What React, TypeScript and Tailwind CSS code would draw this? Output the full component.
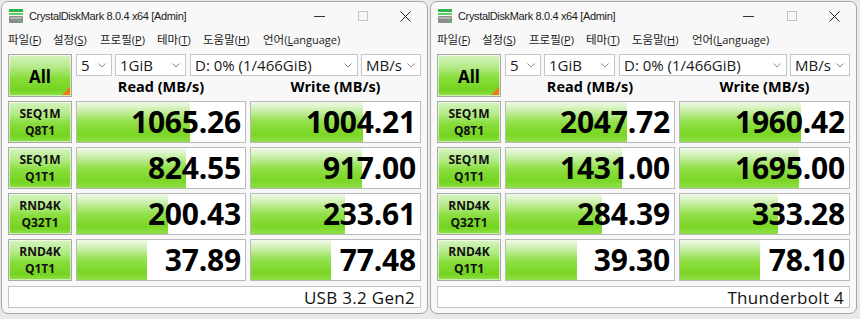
import React from 'react';

type Row = { l1: string; l2: string; read: number; write: number };

type Win = { rows: Row[]; comment: string };

const windows: Win[] = [
  {
    comment: 'USB 3.2 Gen2',
    rows: [
      { l1: 'SEQ1M', l2: 'Q8T1', read: 1065.26, write: 1004.21 },
      { l1: 'SEQ1M', l2: 'Q1T1', read: 824.55, write: 917.0 },
      { l1: 'RND4K', l2: 'Q32T1', read: 200.43, write: 233.61 },
      { l1: 'RND4K', l2: 'Q1T1', read: 37.89, write: 77.48 },
    ],
  },
  {
    comment: 'Thunderbolt 4',
    rows: [
      { l1: 'SEQ1M', l2: 'Q8T1', read: 2047.72, write: 1960.42 },
      { l1: 'SEQ1M', l2: 'Q1T1', read: 1431.0, write: 1695.0 },
      { l1: 'RND4K', l2: 'Q32T1', read: 284.39, write: 333.28 },
      { l1: 'RND4K', l2: 'Q1T1', read: 39.3, write: 78.1 },
    ],
  },
];

const ui = '"Open Sans", "Noto Sans CJK KR", sans-serif';

const greenBtn =
  'bg-[linear-gradient(to_bottom,#d6f4c0_0%,#b4ea88_30%,#88dd3c_55%,#74d41e_85%,#90e14e_100%)] border border-[#a9a9a9] shadow-[inset_0_0_0_1px_rgba(255,255,255,0.55)]';

// log-scale meter, fitted to the reference bars
const meter = (v: number) => Math.min(100, ((24 + 29.7 * Math.log10(v)) / 170) * 100);

const menus = [
  { k: '파일', key: 'F', w: 'w-[45px]' },
  { k: '설정', key: 'S', w: 'w-[47px]' },
  { k: '프로필', key: 'P', w: 'w-[57px]' },
  { k: '테마', key: 'T', w: 'w-[46px]' },
  { k: '도움말', key: 'H', w: 'w-[60px]' },
  { k: '언어', key: 'Language', w: '' },
];

function AppIcon() {
  return (
    <svg width="16" height="16" viewBox="0 0 16 16">
      <rect x="1" y="1" width="14" height="3" fill="#2fb34a" />
      <rect x="1" y="5" width="14" height="2" fill="#5fcf5f" />
      <rect x="1" y="8" width="14" height="7" rx="1" fill="#8c8c8c" />
      <rect x="2" y="9" width="12" height="2" fill="#b5b5b5" />
      <rect x="11" y="12" width="2" height="2" fill="#39d353" />
    </svg>
  );
}

function Chevron() {
  return (
    <svg width="8" height="5" viewBox="0 0 8 5" className="shrink-0">
      <polyline points="0.5,0.5 4,4 7.5,0.5" fill="none" stroke="#8a8a8a" strokeWidth="1" />
    </svg>
  );
}

function Select({ w, text }: { w: string; text: string }) {
  return (
    <div className={`${w} h-[22px] bg-white border border-[#c6c6c6] flex items-center justify-between pl-[4px] pr-[5px] text-[15px] text-[#1a1a1a]`}>
      <span className="leading-none">{text}</span>
      <Chevron />
    </div>
  );
}

function Value({ v }: { v: number }) {
  return (
    <div className="relative h-full bg-white border border-[#b9b9b9] flex items-center justify-end pr-[4px]">
      <div
        className="absolute left-0 top-0 bottom-0 bg-[linear-gradient(to_bottom,#f0faea_0%,#c8efa8_22%,#92e04a_50%,#7ad624_80%,#8fdf48_100%)]"
        style={{ width: `${meter(v)}%` }}
      />
      <span className="relative text-[30px] font-bold leading-none text-black tracking-[-0.2px]">{v.toFixed(2)}</span>
    </div>
  );
}

function Window({ win }: { win: Win }) {
  return (
    <div className="w-[427px] h-[313px] mt-[1px] border border-[#a6a6a6] rounded-[7px] bg-[#f8f8f8] flex flex-col overflow-hidden">
      <div className="h-[28px] flex items-center pl-[6px]">
        <AppIcon />
        <span
          className="ml-[5px] text-[11px] tracking-[-0.35px] text-[#1a1a1a]"
          style={{ fontFamily: '"Liberation Sans", sans-serif' }}
        >
          CrystalDiskMark 8.0.4 x64 [Admin]
        </span>
        <div className="ml-auto flex h-full">
          <div className="w-[43px] flex items-center justify-center">
            <div className="w-[11px] h-[1px] bg-[#333]" />
          </div>
          <div className="w-[43px] flex items-center justify-center">
            <div className="w-[10px] h-[10px] border border-[#c4c4c4]" />
          </div>
          <div className="w-[43px] flex items-center justify-center">
            <svg width="11" height="11" viewBox="0 0 11 11">
              <path d="M0.5 0.5 L10.5 10.5 M10.5 0.5 L0.5 10.5" stroke="#222" strokeWidth="1" />
            </svg>
          </div>
        </div>
      </div>

      <div className="h-[20px] flex items-center pl-[6px]">
        {menus.map((m) => (
          <span key={m.k} className={`${m.w} shrink-0 whitespace-nowrap text-[11.5px] text-[#1a1a1a]`}>
            {m.k}
            <span className="text-[11px]">
              (<span className="underline">{m.key.slice(0, 1)}</span>
              {m.key.slice(1)})
            </span>
          </span>
        ))}
      </div>

      <div className="px-[6px] pt-[4px] flex flex-col">
        <div className="flex gap-[4px]">
          <div className={`relative w-[64px] h-[43px] ${greenBtn} flex items-center justify-center`}>
            <span className="text-[17px] font-bold text-black mt-[2px]">All</span>
            <div className="absolute right-[1px] bottom-[1px] w-[8px] h-[8px] bg-[#f07818] [clip-path:polygon(100%_0,100%_100%,0_100%)]" />
          </div>
          <div className="flex flex-col flex-1">
            <div className="flex h-[22px]">
              <Select w="w-[36px]" text="5" />
              <div className="w-[3px]" />
              <Select w="w-[71px]" text="1GiB" />
              <div className="w-[4px]" />
              <Select w="w-[168px]" text="D: 0% (1/466GiB)" />
              <div className="w-[3px]" />
              <Select w="w-[60px]" text="MB/s" />
            </div>
            <div className="flex h-[21px] items-center">
              <div className="w-[170px] text-center text-[14.5px] font-bold text-black">Read (MB/s)</div>
              <div className="w-[4px]" />
              <div className="w-[171px] text-center text-[14.5px] font-bold text-black">Write (MB/s)</div>
            </div>
          </div>
        </div>

        {win.rows.map((r, i) => (
          <div key={i} className="grid grid-cols-[64px_170px_171px] gap-[4px] h-[42px] mt-[4px]">
            <div className={`${greenBtn} flex flex-col items-center justify-center text-[12px] font-bold leading-[17px] text-[#111]`}>
              <span>{r.l1}</span>
              <span>{r.l2}</span>
            </div>
            <Value v={r.read} />
            <Value v={r.write} />
          </div>
        ))}

        <div className="mt-[5px] h-[22px] bg-white border border-[#c4c4c4] flex items-center justify-end pr-[5px]">
          <span className="text-[17px] leading-none text-[#111] tracking-[0.3px]">{win.comment}</span>
        </div>
      </div>
    </div>
  );
}

export default function App() {
  return (
    <div className="w-[860px] h-[319px] bg-[#e9e9e9] flex gap-[2px] pl-[1px]" style={{ fontFamily: ui }}>
      {windows.map((w, i) => (
        <Window key={i} win={w} />
      ))}
    </div>
  );
}
